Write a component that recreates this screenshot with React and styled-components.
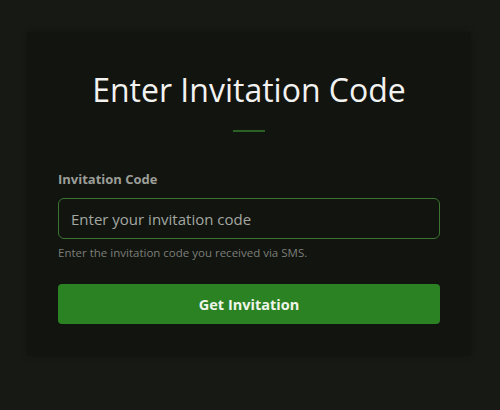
import React, { useState } from "react";
import styled, { createGlobalStyle } from "styled-components";

const GlobalStyle = createGlobalStyle`
  html, body {
    margin: 0;
    padding: 0;
    background: #171a14;
  }
  body {
    font-family: "Open Sans", "Noto Sans", sans-serif;
  }
  * {
    box-sizing: border-box;
  }
`;

const Page = styled.div`
  width: 500px;
  height: 410px;
  padding: 32px 29px 0 27px;
  background: #171a14;
`;

const Card = styled.form`
  display: flex;
  flex-direction: column;
  width: 444px;
  height: 324px;
  padding: 38px 31px 0 31px;
  background: #121410;
  box-shadow: 0 0 6px rgba(0, 0, 0, 0.25);
`;

const Title = styled.h1`
  margin: 0;
  text-align: center;
  font-size: 32px;
  font-weight: 400;
  line-height: 40px;
  color: #f2f2f0;
`;

const Divider = styled.div`
  width: 32px;
  height: 2px;
  margin: 20px auto 0;
  background: #2c6125;
`;

const Field = styled.div`
  display: flex;
  flex-direction: column;
  margin-top: 38px;
`;

const Label = styled.label`
  font-size: 13px;
  font-weight: 700;
  line-height: 18px;
  color: #9c9e98;
`;

const Input = styled.input`
  width: 100%;
  height: 41px;
  margin-top: 10px;
  padding: 0 12px;
  background: #121410;
  border: 1px solid #3a7531;
  border-radius: 6px;
  font-family: inherit;
  font-size: 15px;
  color: #e6e8e2;
  outline: none;

  &::placeholder {
    color: #a3a8a0;
  }
`;

const Help = styled.p`
  margin: 6px 0 0;
  font-size: 11.5px;
  line-height: 16px;
  color: #7c7f78;
`;

const Button = styled.button`
  width: 100%;
  height: 40px;
  margin-top: 23px;
  border: none;
  border-radius: 4px;
  background: #2a8222;
  font-family: inherit;
  font-size: 14.5px;
  font-weight: 700;
  color: #eef5ea;
  cursor: pointer;
`;

export default function App() {
  const [code, setCode] = useState("");

  return (
    <>
      <GlobalStyle />
      <Page>
        <Card onSubmit={(e) => e.preventDefault()}>
          <Title>Enter Invitation Code</Title>
          <Divider />
          <Field>
            <Label htmlFor="invitation-code">Invitation Code</Label>
            <Input
              id="invitation-code"
              value={code}
              onChange={(e) => setCode(e.target.value)}
              placeholder="Enter your invitation code"
            />
            <Help>Enter the invitation code you received via SMS.</Help>
          </Field>
          <Button type="submit">Get Invitation</Button>
        </Card>
      </Page>
    </>
  );
}
